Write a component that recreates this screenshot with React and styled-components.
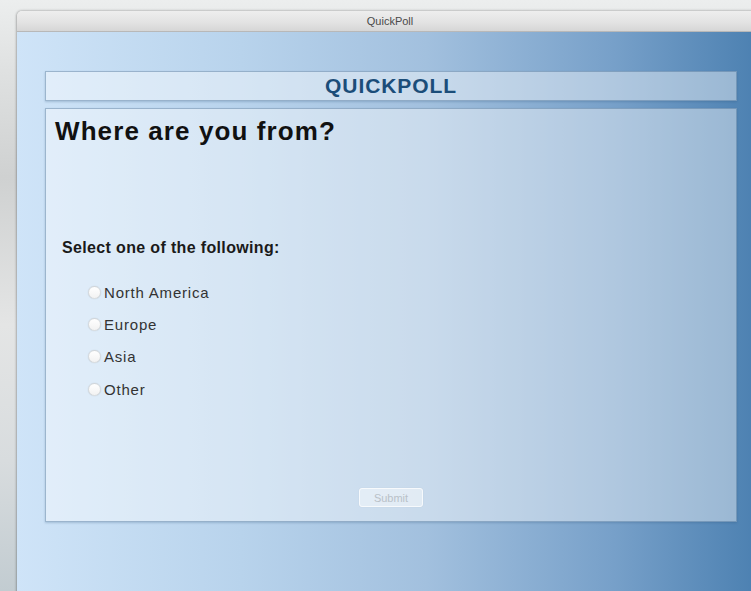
import React from 'react';
import styled, {createGlobalStyle} from 'styled-components';

const GlobalStyle = createGlobalStyle`
  html, body {
    margin: 0;
    padding: 0;
    height: 100%;
    overflow: hidden;
  }
  body {
    font-family: "Liberation Sans", Arial, sans-serif;
    background: linear-gradient(180deg, #eceeee 0%, #dfe1e1 12%, #cfd1d1 30%, #e4e5e5 55%, #d8dcde 78%, #c2ccd1 100%);
  }
  #root {
    height: 100%;
  }
`;

const Desktop = styled.div`
  height: 100%;
  padding: 11px 0 0 17px;
  box-sizing: border-box;
  overflow: hidden;
`;

const Window = styled.div`
  width: 746px;
  height: 600px;
  display: flex;
  flex-direction: column;
  border-radius: 5px 5px 0 0;
  overflow: hidden;
  box-shadow: 0 0 3px rgba(0, 0, 0, 0.3), -1px 0 2px rgba(0, 0, 0, 0.12);
`;

const TitleBar = styled.div`
  height: 21px;
  flex: none;
  display: flex;
  align-items: center;
  justify-content: center;
  background: linear-gradient(180deg, #eeeeee 0%, #e2e2e2 60%, #d6d6d6 100%);
  border-bottom: 1px solid #b8b8b8;
  box-sizing: border-box;
  font-size: 11px;
  color: #4a4a4a;
`;

const Content = styled.div`
  flex: 1;
  padding: 39px 26px 0 28px;
  background: linear-gradient(90deg, #cfe4f8 0%, #b8d3ec 30%, #a2c0de 55%, #77a0c9 80%, #4a7fb0 100%);
`;

const Card = styled.div`
  box-sizing: border-box;
  background: rgba(255, 255, 255, 0.42);
  border: 1px solid rgba(70, 110, 150, 0.45);
  box-shadow: 0 1px 2px rgba(40, 80, 120, 0.25);
`;

const Header = styled(Card)`
  height: 30px;
  display: flex;
  align-items: center;
  justify-content: center;
  font-size: 21px;
  font-weight: 700;
  letter-spacing: 0.9px;
  color: #1b4d79;
`;

const Panel = styled(Card)`
  margin-top: 7px;
  height: 414px;
  display: flex;
  flex-direction: column;
  padding: 7px 9px 14px 9px;
`;

const Question = styled.h1`
  margin: 0;
  font-size: 26px;
  line-height: 30px;
  font-weight: 700;
  letter-spacing: 1.1px;
  color: #111;
`;

const Prompt = styled.div`
  margin: 92px 0 0 7px;
  font-size: 16px;
  line-height: 19px;
  font-weight: 700;
  letter-spacing: 0.35px;
  color: #1a1a1a;
`;

const Options = styled.div`
  margin: 19px 0 0 33px;
  display: flex;
  flex-direction: column;
`;

const Option = styled.label`
  height: 32.4px;
  display: flex;
  align-items: center;
  gap: 3px;
  font-size: 15px;
  letter-spacing: 0.8px;
  color: #333;
`;

const Radio = styled.input`
  appearance: none;
  margin: 0;
  width: 13px;
  height: 13px;
  border-radius: 50%;
  background: linear-gradient(180deg, #ffffff 0%, #f2f2f2 100%);
  border: 1px solid rgba(150, 160, 170, 0.35);
  box-shadow: 0 0 1px rgba(0, 0, 0, 0.2);
  box-sizing: border-box;
`;

const SubmitButton = styled.button`
  margin: auto auto 0;
  width: 64px;
  height: 19px;
  padding: 0;
  border: 1px solid rgba(255, 255, 255, 0.7);
  border-radius: 3px;
  background: rgba(255, 255, 255, 0.45);
  box-shadow: 0 0 1px rgba(0, 0, 0, 0.15);
  font-family: "Liberation Sans", Arial, sans-serif;
  font-size: 11px;
  color: #b9c1c8;
`;

const regions = ['North America', 'Europe', 'Asia', 'Other'];

const App = () => {
  return (
    <Desktop>
      <GlobalStyle />
      <Window>
        <TitleBar>QuickPoll</TitleBar>
        <Content>
          <Header>QUICKPOLL</Header>
          <Panel>
            <Question>Where are you from?</Question>
            <Prompt>Select one of the following:</Prompt>
            <Options>
              {regions.map((region) => (
                <Option key={region}>
                  <Radio type="radio" name="region" value={region} />
                  {region}
                </Option>
              ))}
            </Options>
            <SubmitButton disabled>Submit</SubmitButton>
          </Panel>
        </Content>
      </Window>
    </Desktop>
  );
};

export default App;
